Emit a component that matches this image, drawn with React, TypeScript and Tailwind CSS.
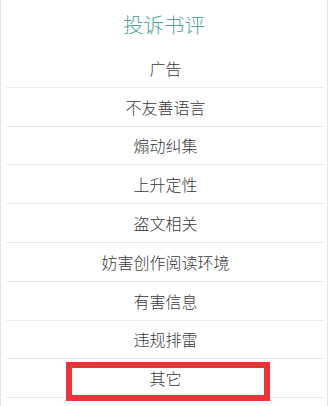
import React from "react";

const reasons = [
  "广告",
  "不友善语言",
  "煽动纠集",
  "上升定性",
  "盗文相关",
  "妨害创作阅读环境",
  "有害信息",
  "违规排雷",
  "其它",
];

export default function App() {
  return (
    <div
      className="w-[328px] h-[406px] overflow-hidden bg-white border-x border-[#e6e6e6]"
      style={{ fontFamily: '"Noto Sans CJK SC", "Noto Sans", sans-serif' }}
    >
      <div className="h-[49px] flex items-center justify-center text-[20.5px] font-light text-[#4fa79b]">
        投诉书评
      </div>
      <ul className="pl-[5px] pr-[2px]">
        {reasons.map((r, i) => (
          <li
            key={r}
            className="relative h-[38.8px] flex items-center justify-center border-b border-[#ececec] text-[16px] font-light text-[#3a3a3a]"
          >
            {r}
            {i === reasons.length - 1 && (
              <span className="absolute left-[60px] top-[2.5px] w-[204px] h-[39px] border-[6px] border-[#ee3338]" />
            )}
          </li>
        ))}
      </ul>
    </div>
  );
}
